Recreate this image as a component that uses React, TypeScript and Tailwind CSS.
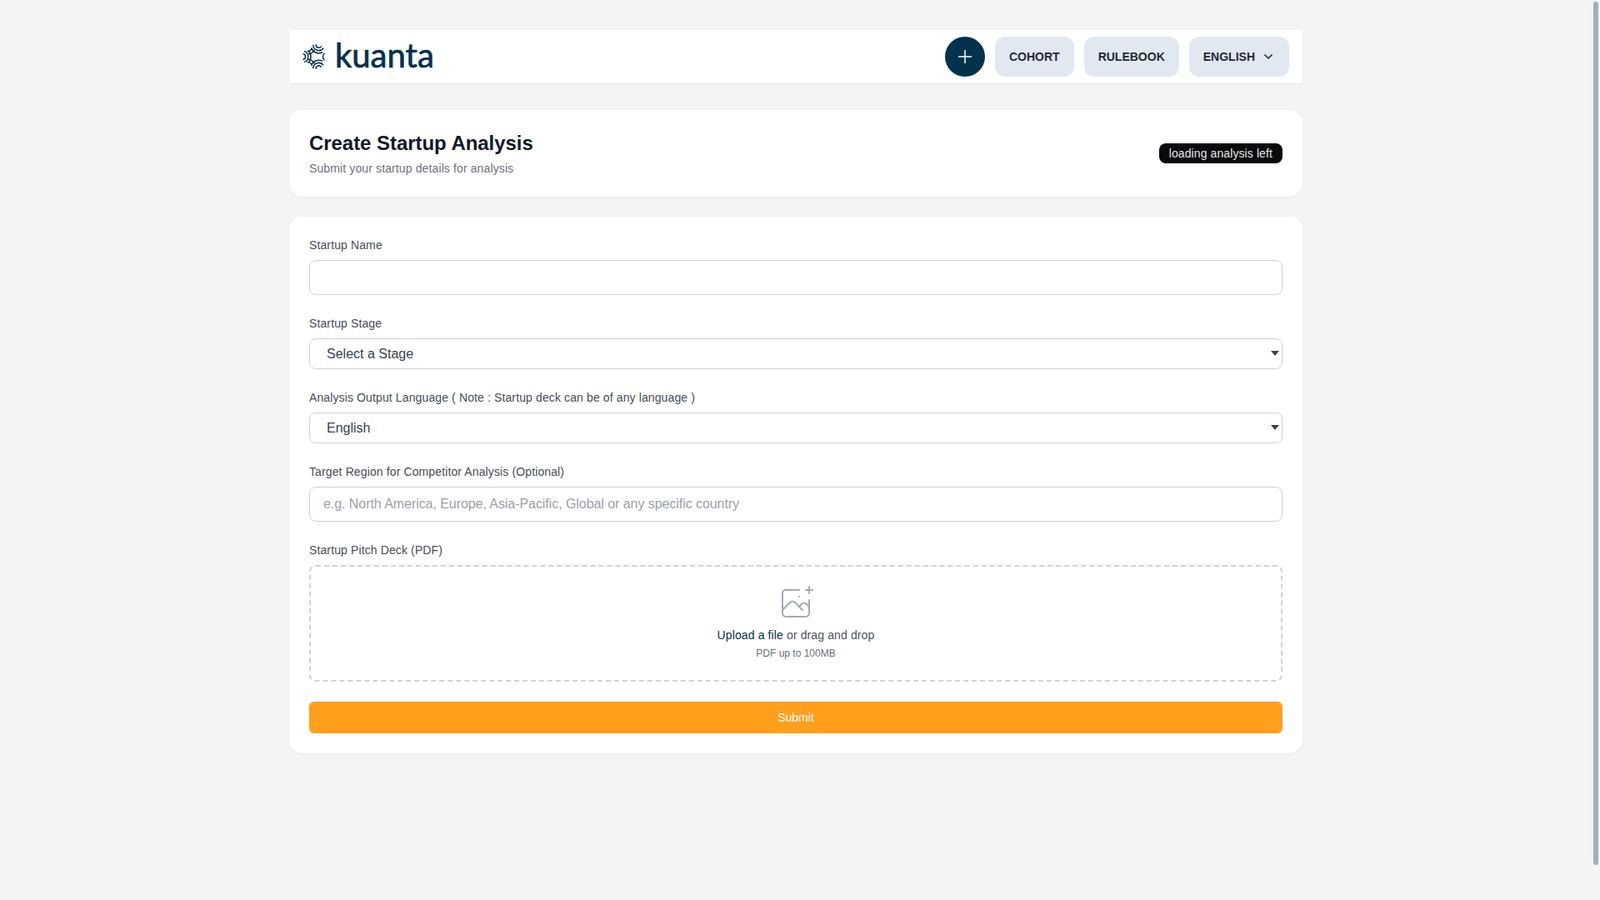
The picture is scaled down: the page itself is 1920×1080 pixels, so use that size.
import { ChevronDown } from 'lucide-react';

// one arc of a circle around the point that sits on the mark's rim
function rimArc(theta: number, r: number, spread: number) {
  const rad = (d: number) => (d * Math.PI) / 180;
  const cx = 15 + 15 * Math.cos(rad(theta));
  const cy = 15 + 15 * Math.sin(rad(theta));
  const inward = theta + 180;
  const x0 = cx + r * Math.cos(rad(inward - spread));
  const y0 = cy + r * Math.sin(rad(inward - spread));
  const x1 = cx + r * Math.cos(rad(inward + spread));
  const y1 = cy + r * Math.sin(rad(inward + spread));
  return `M${x0.toFixed(2)} ${y0.toFixed(2)}A${r} ${r} 0 0 1 ${x1.toFixed(2)} ${y1.toFixed(2)}`;
}

const logoArcs = [
  ...[180, -72, 72].flatMap((t) => [rimArc(t, 3.5, 80), rimArc(t, 6.8, 72), rimArc(t, 10, 46)]),
  ...[-126, 126].flatMap((t) => [rimArc(t, 5.5, 42), rimArc(t, 9, 30)]),
  ...[0].flatMap((t) => [rimArc(t, 5.5, 50)]),
];

function LogoMark() {
  return (
    <svg viewBox="0 0 30 30" className="w-[30px] h-[30px]" fill="none" stroke="#03324c" strokeWidth="1.5">
      {logoArcs.map((d) => (
        <path key={d} d={d} />
      ))}
    </svg>
  );
}

function Label({ children }: { children: React.ReactNode }) {
  return <label className="block text-sm tracking-[0.12px] text-[#454d5b] mb-2">{children}</label>;
}

function Select({ value }: { value: string }) {
  return (
    <div className="relative">
      <select className="block w-full h-[37px] appearance-none rounded-lg border border-[#d1d1db] pl-5 text-base text-gray-700 bg-white">
        <option>{value}</option>
      </select>
      <svg viewBox="0 0 10 6" className="absolute right-1 top-[15px] w-2.5 h-1.5 fill-gray-700">
        <path d="M0 0h10L5 6z" />
      </svg>
    </div>
  );
}

export default function App() {
  return (
    <div className="h-screen overflow-hidden flex bg-[#f4f4f4] font-['Liberation_Sans',Arial,sans-serif]">
      <div className="flex-1">
        <div className="mx-auto max-w-7xl px-8 pt-9">
          <nav className="h-16 bg-white shadow-[0_1px_2px_rgba(0,0,0,0.05)] flex items-center justify-between px-4">
            <div className="flex items-center gap-[9px]">
              <LogoMark />
              <span className="font-['Lato',sans-serif] text-[40px] leading-none text-[#03324c] -mt-1 [-webkit-text-stroke:0.7px_#03324c]">kuanta</span>
            </div>
            <div className="flex items-center gap-3">
              <button className="w-12 h-12 rounded-full bg-[#03324c] flex items-center justify-center">
                <svg viewBox="0 0 24 24" className="w-6 h-6" fill="none" stroke="white" strokeWidth="1.5" strokeLinecap="round" strokeLinejoin="round">
                  <path d="M12 4.5v15m7.5-7.5h-15" />
                </svg>
              </button>
              <button className="h-12 px-[17px] rounded-xl bg-slate-200 text-sm font-semibold text-gray-800">COHORT</button>
              <button className="h-12 px-[17px] rounded-xl bg-slate-200 text-sm font-semibold text-gray-800">RULEBOOK</button>
              <button className="h-12 px-[17px] rounded-xl bg-slate-200 text-sm font-semibold text-gray-800 flex items-center gap-2">
                ENGLISH
                <ChevronDown className="w-4 h-4" strokeWidth={2.5} />
              </button>
            </div>
          </nav>

          <div className="mt-8 bg-white rounded-2xl shadow-[0_1px_2px_rgba(0,0,0,0.05)] p-6 flex items-center justify-between">
            <div>
              <h1 className="text-2xl font-bold tracking-[-0.05px] text-gray-900">Create Startup Analysis</h1>
              <p className="mt-1 text-sm tracking-[0.12px] text-gray-500">Submit your startup details for analysis</p>
            </div>
            <span className="h-6 px-3 rounded-lg bg-[#0a0a0c] text-sm tracking-[0.1px] text-gray-200 flex items-center">loading analysis left</span>
          </div>

          <form className="mt-6 bg-white rounded-2xl shadow-[0_1px_2px_rgba(0,0,0,0.05)] p-6 space-y-6">
            <div>
              <Label>Startup Name</Label>
              <input className="block w-full h-[42px] rounded-lg border border-[#d1d1db] px-4 text-base" />
            </div>
            <div>
              <Label>Startup Stage</Label>
              <Select value="Select a Stage" />
            </div>
            <div>
              <Label>Analysis Output Language ( Note : Startup deck can be of any language )</Label>
              <Select value="English" />
            </div>
            <div>
              <Label>Target Region for Competitor Analysis (Optional)</Label>
              <input
                className="block w-full h-[42px] rounded-lg border border-[#d1d1db] px-4 text-base tracking-[-0.06px] placeholder:text-gray-400"
                placeholder="e.g. North America, Europe, Asia-Pacific, Global or any specific country"
              />
            </div>
            <div>
              <Label>Startup Pitch Deck (PDF)</Label>
              <div className="border-2 border-dashed border-[#d1d1db] rounded-lg pt-5 pb-6 flex flex-col items-center">
                <svg viewBox="0 0 48 48" className="w-12 h-12 text-[#a3a9b6]" fill="none" stroke="currentColor" strokeWidth="2" strokeLinecap="round" strokeLinejoin="round">
                  <path d="M28 8H12a4 4 0 00-4 4v20m32-12v8m0 0v8a4 4 0 01-4 4H12a4 4 0 01-4-4v-4m32-4l-3.172-3.172a4 4 0 00-5.656 0L28 28M8 32l9.172-9.172a4 4 0 015.656 0L28 28m0 0l4 4m4-24h8m-4-4v8m-12 4h.02" />
                </svg>
                <p className="mt-1 text-sm tracking-[0.12px] text-gray-600">
                  <span className="text-[#03324c]">Upload a file</span> or drag and drop
                </p>
                <p className="mt-1 text-xs text-gray-500">PDF up to 100MB</p>
              </div>
            </div>
            <button type="button" className="block w-full h-[38px] rounded-md bg-[#ff9f1c] text-sm text-white">Submit</button>
          </form>
        </div>
      </div>
      <div className="w-2.5 p-0.5">
        <div className="h-[1036px] rounded-[3px] bg-[#a0b0b8]" />
      </div>
    </div>
  );
}
